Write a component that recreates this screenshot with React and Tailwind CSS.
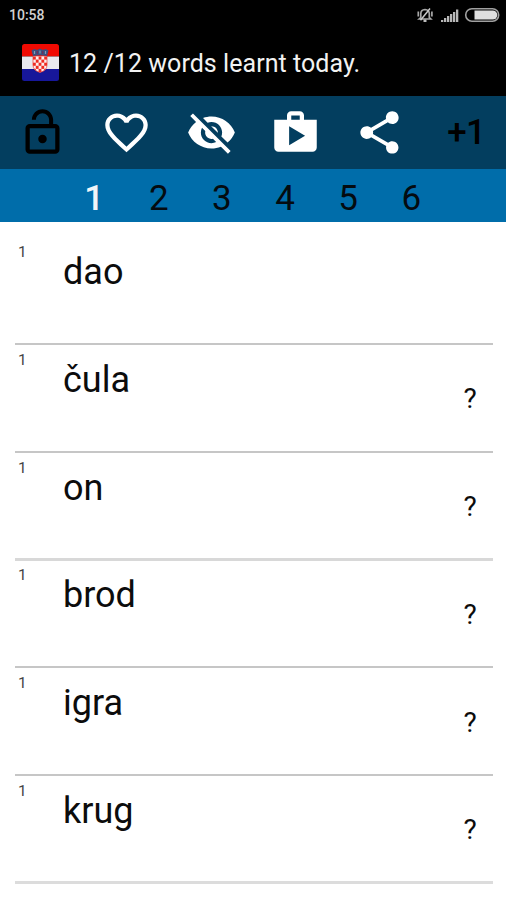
const words = ["dao", "čula", "on", "brod", "igra", "krug"];
const lines = ["bg-[#c6c6c6] h-[2px]", "bg-[#c6c6c6] h-[2px]", "bg-[#d8d8d8] h-[3px] -mb-px", "bg-[#c6c6c6] h-[2px]", "bg-[#c6c6c6] h-[2px]", "bg-[#dcdcdc] h-[3px]"];

function Icon({ d, color }) {
  return (
    <div className="flex justify-center pl-px">
      <svg viewBox="0 0 24 24" className={`h-[51px] w-[51px] shrink-0 ${color}`} fill="currentColor">
        <path d={d} />
      </svg>
    </div>
  );
}

function Flag() {
  const cells = [];
  for (let r = 0; r < 5; r++)
    for (let c = 0; c < 5; c++)
      if ((r + c) % 2 === 0) cells.push(<rect key={`${r}${c}`} x={11 + c * 2.8} y={12.5 + r * 3.1} width="2.8" height="3.1" fill="#ee2a22" />);
  return (
    <svg viewBox="0 0 37 37" className="h-[37px] w-[37px]">
      <defs>
        <clipPath id="flag"><rect width="37" height="37" rx="2.5" /></clipPath>
        <clipPath id="shield"><path d="M11 12h14v9q0 5.500-7 7.500q-7-2-7-7.500z" /></clipPath>
      </defs>
      <g clipPath="url(#flag)">
        <rect width="37" height="12.5" fill="#f00a02" />
        <rect y="12.500" width="37" height="12.500" fill="#e9e9ee" />
        <rect y="25" width="37" height="12" fill="#17179a" />
      </g>
      <g clipPath="url(#shield)">
        <rect x="11" y="12" width="14" height="17" fill="#fbeeee" />
        {cells}
      </g>
      <path d="M11 12h14v9q0 5.500-7 7.500q-7-2-7-7.500z" fill="none" stroke="#ee3a30" strokeWidth=".7" />
      <path d="M9.500 6.500l2.800-1.500 2.800 1 2.900-1.500 2.900 1.500 2.800-1 2.800 1.500-1.500 5.500q-7-1.600-14 0z" fill="#3c5080" />
      <path d="M12.500 7v3M18 6.500v3M23.500 7v3" stroke="#7f9db8" strokeWidth="1.200" />
      <path d="M15.300 7v3M20.700 7v3" stroke="#702d58" strokeWidth="1.200" />
    </svg>
  );
}

export default function App() {
  return (
    <div className="h-[900px] w-[506px] overflow-hidden bg-white font-['Roboto',sans-serif] text-[#0c0c0c]">
      <div className="flex h-[30px] items-center bg-black pr-[6px] pl-[9px] text-[#d0d0d0]">
        <span className="flex-1 text-[14px] leading-[30px] font-medium">10:58</span>
        <svg viewBox="0 0 84 18" className="h-[18px] w-[84px]" fill="none">
          <path d="M4.800 11.500V7.500Q5 3.700 9 3.500Q13 3.700 13.300 7.500V11.500L14.800 13H3.200zM2.300 5.500v5M15.900 5.500v5" stroke="#a8a8a8" strokeWidth="1.700" />
          <path d="M4.500 14.200L14 2.500" stroke="#c8c8c8" strokeWidth="1.500" />
          <path d="M7.500 13.500h3V16h-3z" fill="#bdbdbd" />
          <path d="M25 14h2.300v2H25zM28 12h2.300v4H28zM31 10h2.300v6H31zM34 8h2.300v8H34zM37 6h2.300v10H37zM40 3.500h2.300V16H40z" fill="#b8b8b8" />
          <rect x="49.700" y="2.700" width="33" height="12.500" rx="6.200" stroke="#a0a0a0" strokeWidth="1.600" />
          <path d="M58.500 4.500h18.300a4.400 4.400 0 0 1 0 9H58.500z" fill="#dedede" />
        </svg>
      </div>

      <div className="flex h-[66px] items-center bg-black pb-[2px] pl-[22px]">
        <Flag />
        <span className="ml-[10px] pt-[4px] text-[25px] leading-[34px] tracking-[0.05px] whitespace-nowrap text-[#f2f2f2]">12 /12 words learnt today.</span>
      </div>

      <div className="grid h-[73px] grid-cols-6 items-center bg-[#033e5f] pb-px">
        <Icon color="text-black" d="M12 17c1.100 0 2-.9 2-2s-.9-2-2-2-2 .9-2 2 .9 2 2 2zm6-9h-1V6c0-2.760-2.240-5-5-5S7 3.240 7 6h1.900c0-1.710 1.390-3.100 3.100-3.100 1.710 0 3.100 1.390 3.100 3.100v2H6c-1.100 0-2 .9-2 2v10c0 1.100.9 2 2 2h12c1.100 0 2-.9 2-2V10c0-1.100-.9-2-2-2zm0 12H6V10h12v10z" />
        <Icon color="text-white" d="M16.500 3c-1.740 0-3.410.81-4.500 2.090C10.910 3.810 9.240 3 7.500 3 4.420 3 2 5.420 2 8.500c0 3.780 3.400 6.860 8.550 11.540L12 21.350l1.450-1.320C18.600 15.360 22 12.280 22 8.500 22 5.420 19.580 3 16.500 3zm-4.400 15.550l-.1.100-.1-.1C7.140 14.240 4 11.390 4 8.500 4 6.500 5.500 5 7.500 5c1.540 0 3.040.99 3.570 2.360h1.870C13.460 5.990 14.960 5 16.500 5c2 0 3.500 1.500 3.500 3.500 0 2.890-3.140 5.740-7.900 10.050z" />
        <Icon color="text-white" d="M12 7c2.760 0 5 2.240 5 5 0 .65-.13 1.260-.36 1.830l2.920 2.920c1.510-1.260 2.700-2.890 3.430-4.750-1.730-4.390-6-7.500-11-7.500-1.400 0-2.740.25-3.980.7l2.160 2.160C10.740 7.130 11.350 7 12 7zM2 4.270l2.280 2.280.46.46C3.080 8.300 1.780 10.020 1 12c1.730 4.390 6 7.500 11 7.500 1.550 0 3.030-.3 4.380-.84l.42.42L19.730 22 21 20.730 3.270 3 2 4.270zM7.530 9.800l1.550 1.550c-.05.21-.08.43-.08.65 0 1.660 1.340 3 3 3 .22 0 .44-.03.65-.08l1.550 1.550c-.67.33-1.410.53-2.200.53-2.760 0-5-2.240-5-5 0-.79.2-1.530.53-2.200zm4.310-.78l3.150 3.150.02-.16c0-1.660-1.340-3-3-3l-.17.01z" />
        <Icon color="text-white" d="M16 6V4c0-1.110-.89-2-2-2h-4c-1.110 0-2 .89-2 2v2H2v13c0 1.110.89 2 2 2h16c1.110 0 2-.89 2-2V6h-6zm-6-2h4v2h-4V4zM9 18V9l7.500 4.500L9 18z" />
        <Icon color="text-white" d="M18 16.080c-.76 0-1.440.3-1.960.77L8.910 12.700c.05-.23.090-.46.090-.7s-.04-.47-.09-.7l7.050-4.110c.54.5 1.250.81 2.040.81 1.660 0 3-1.340 3-3s-1.340-3-3-3-3 1.340-3 3c0 .24.040.47.090.7L8.040 9.810C7.500 9.310 6.790 9 6 9c-1.660 0-3 1.340-3 3s1.340 3 3 3c.79 0 1.500-.31 2.040-.81l7.120 4.160c-.05.21-.08.43-.08.65 0 1.610 1.310 2.920 2.920 2.920 1.610 0 2.920-1.310 2.920-2.920s-1.310-2.920-2.920-2.920z" />
        <span className="pt-[2px] pl-[5px] text-center text-[35px] leading-[50px] font-medium tracking-[-0.5px] text-black">+1</span>
      </div>

      <div className="grid h-[53px] grid-cols-8 bg-[#006daa] pl-px text-center text-[35px] leading-[59px] text-[#040b10]">
        <span className="col-start-2 pr-[3px] font-medium text-[#f0f5f8]">1</span>
        <span>2</span>
        <span>3</span>
        <span>4</span>
        <span>5</span>
        <span>6</span>
      </div>

      <div className="pt-[15px] pr-[13px] pl-[15px]">
        {words.map((w, i) => (
          <div key={w} className="flex h-[107.750px] flex-col">
            <div className="flex flex-1">
              <span className="w-[48px] pt-[5px] pl-[3px] text-[15.500px] leading-[20px] text-[#444]">1</span>
              <span className="flex-1 pt-[13px] text-[36px] leading-[44px]">{w}</span>
              {i > 0 && <span className="w-[30px] pt-[38.500px] pl-[0.5px] text-[28px] leading-[32px]">?</span>}
            </div>
            <div className={lines[i]} />
          </div>
        ))}
      </div>
    </div>
  );
}
